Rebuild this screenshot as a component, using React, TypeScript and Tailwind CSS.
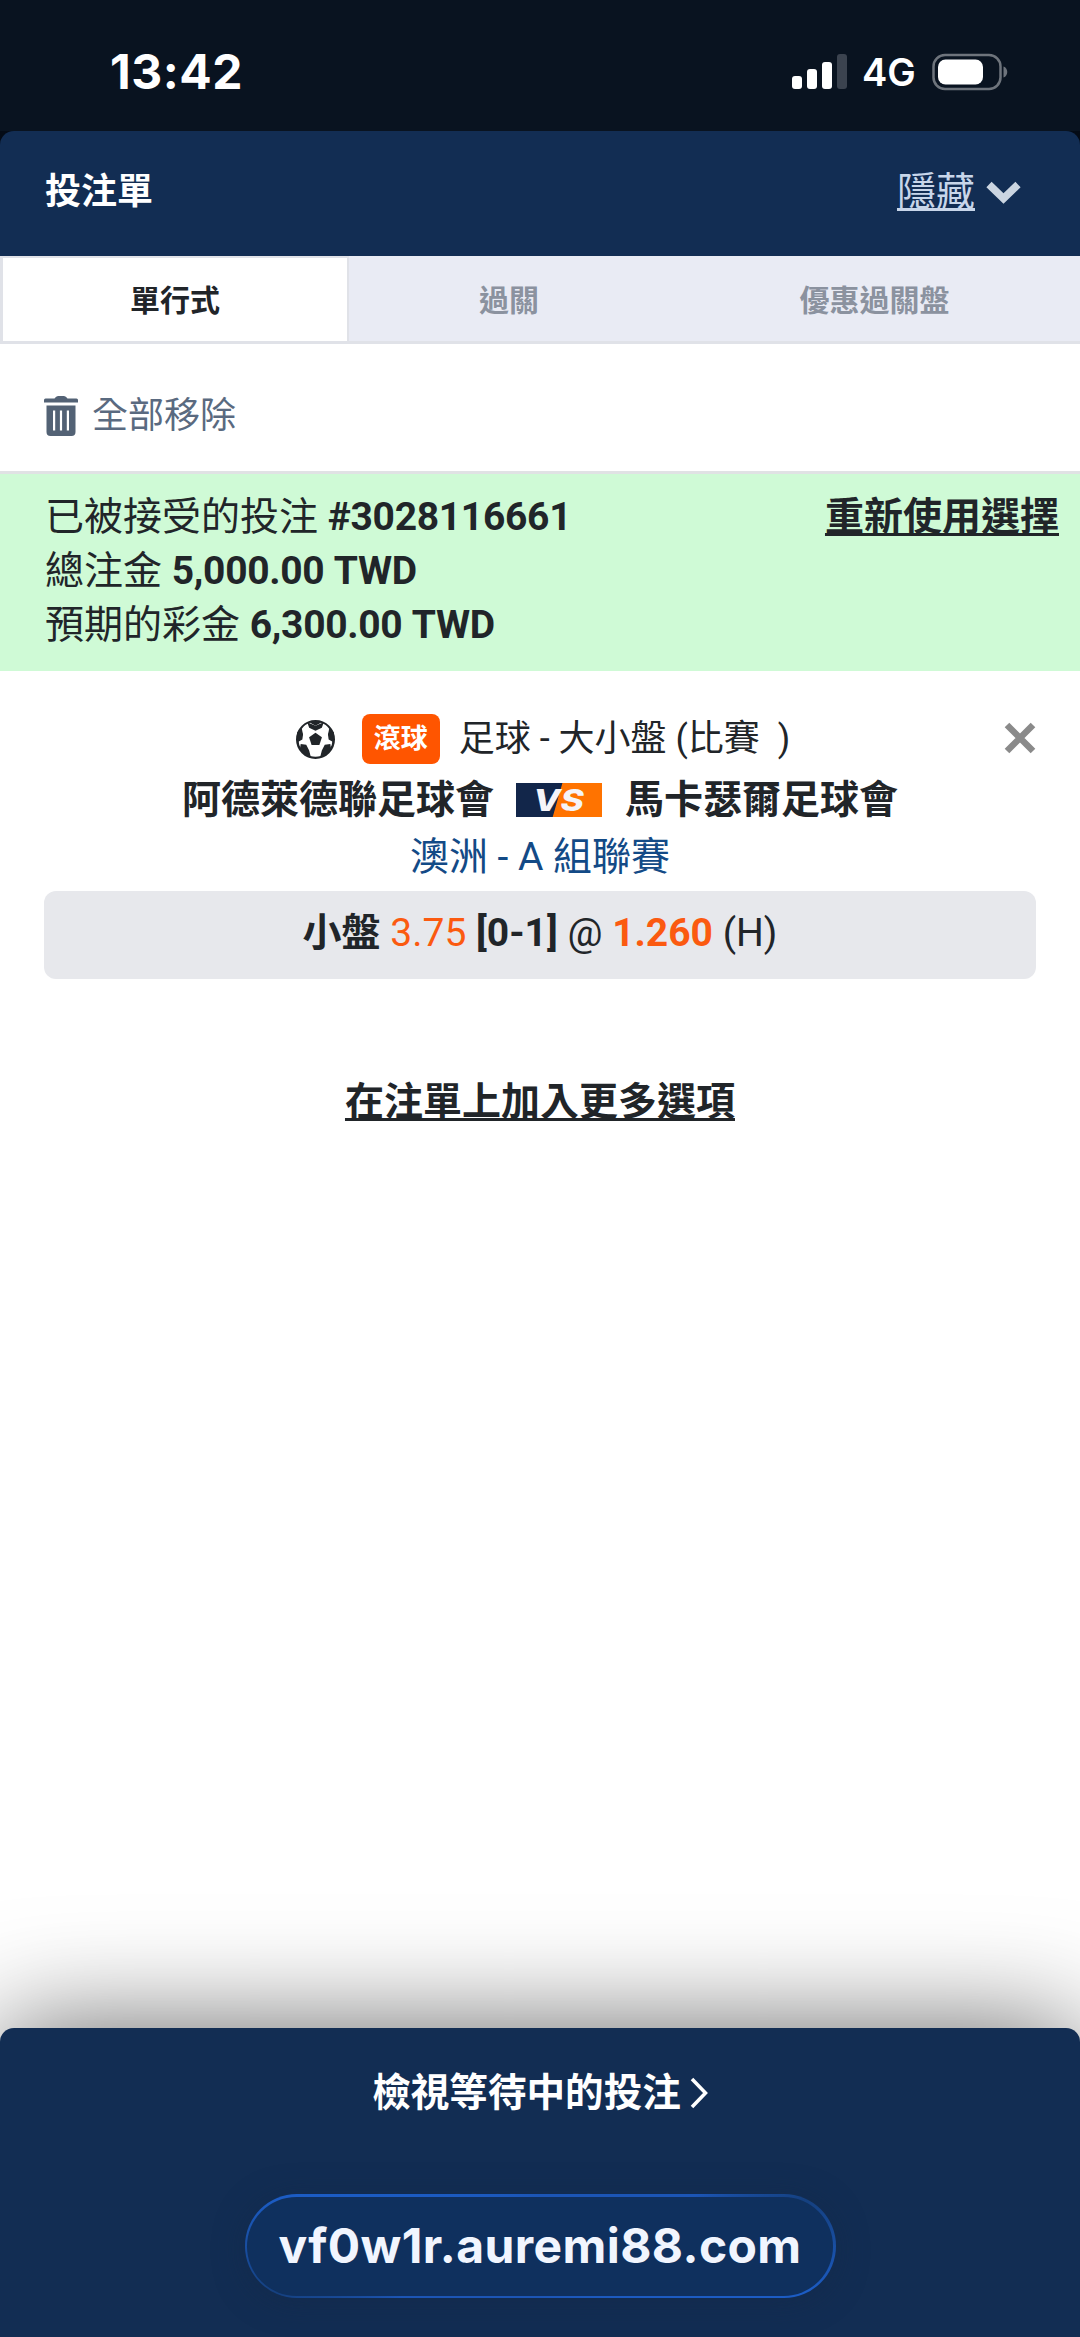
import React from "react";

function StatusBar() {
  return (
    <div className="flex h-[131px] items-center justify-between bg-[#091320] pr-[71px] pl-[110px] pt-[12px] font-['Inter',sans-serif] text-white">
      <span className="text-[48px] leading-none font-bold tracking-[0.5px]">13:42</span>
      <div className="flex items-center">
        <div className="flex h-[35px] items-end gap-[5px]">
          <i className="h-[13px] w-[10px] rounded-[3px] bg-white" />
          <i className="h-[20px] w-[10px] rounded-[3px] bg-white" />
          <i className="h-[27px] w-[10px] rounded-[3px] bg-white" />
          <i className="h-[35px] w-[10px] rounded-[3px] bg-[#3b434f]" />
        </div>
        <span className="ml-[15px] w-[70px] text-[38px] leading-none font-semibold">4G</span>
        <svg width="77" height="38" viewBox="0 0 77 38" fill="none">
          <rect x="1.5" y="2" width="67" height="34" rx="11.5" stroke="#6e747c" strokeWidth="2.5" />
          <rect x="6" y="6.5" width="45" height="25" rx="7.5" fill="#fff" />
          <path d="M71.500 13.500c5 1.500 5 9.500 0 11z" fill="#6e747c" />
        </svg>
      </div>
    </div>
  );
}

function Header() {
  return (
    <div className="bg-[#040b16]">
      <div className="flex h-[125px] items-center justify-between rounded-t-[14px] bg-[#122d53] pr-[59px] pb-[3px] pl-[45px]">
        <h1 className="text-[36px] leading-none font-bold text-white">投注單</h1>
        <div className="flex items-center gap-[11px] text-[#c8d6ea]">
          <span className="text-[39px] leading-none underline decoration-[3px] underline-offset-[3px] [text-decoration-skip-ink:none]">隱藏</span>
          <svg width="35" height="24" viewBox="0 0 35 24" fill="none">
            <path d="M3 4.500 17.500 18.500 32 4.500" stroke="#cbd5e1" strokeWidth="7.500" />
          </svg>
        </div>
      </div>
    </div>
  );
}

function Tabs() {
  return (
    <div className="flex h-[88px] items-stretch border-b-[3px] border-[#e0e2e8] bg-[#e9ebf4] text-[30px] leading-none font-bold text-[#8b929f]">
      <div className="flex w-[349px] items-center justify-center border-t-2 border-r-2 border-l-[3px] border-[#e0e2e8] bg-white pt-[2px] text-[#212529]">單行式</div>
      <div className="flex w-[320px] items-center justify-center pt-[4px]">過關</div>
      <div className="flex flex-1 items-center justify-center pt-[4px]">優惠過關盤</div>
    </div>
  );
}

function Trash() {
  return (
    <svg width="34" height="40" viewBox="0 0 34 40" fill="#536275">
      <path d="M1.500 2.500H10.500Q12 0 14 0H20Q22 0 23.500 2.500H32.500Q34 2.500 34 4V6.500H0V4Q0 2.500 1.500 2.500Z" />
      <path fillRule="evenodd" d="M2.500 9.500H31.500V36Q31.500 40 27.500 40H6.500Q2.500 40 2.500 36ZM9 14.500V34.500H11.200V14.500ZM15.900 14.500V34.500H18.100V14.500ZM22.800 14.500V34.500H25V14.500Z" />
    </svg>
  );
}

function Ball() {
  return (
    <svg width="39" height="39" viewBox="0 0 40 40" fill="#212529">
      <path fillRule="evenodd" d="M20 0A20 20 0 1 0 20 40 20 20 0 1 0 20 0ZM14.500 2.800 20 5.800 25.500 2.800Q31 4.500 34 9L32.800 15 37.600 19.500Q37.500 25.500 34.200 30.500L28 31.200 25.400 36.800Q20 38.500 14.600 36.800L12 31.200 5.800 30.500Q2.500 25.500 2.400 19.500L7.200 15 6 9Q9 4.500 14.500 2.800Z" />
      <path d="M20 13 26.600 17.800 24 25.600H16L13.400 17.800Z" />
      <path d="M11.500 2.200 20 5.800 28.500 2.200 26.500 8 20 10.900 13.500 8ZM4.500 8.500 7.200 15 6.500 20 2 22.500 1 13ZM35.500 8.500 32.800 15 33.500 20 38 22.500 39 13ZM4 30 4.800 24.500 10.500 25.500 13.500 31.200 15.300 38.500 9 36.500ZM36 30 35.200 24.500 29.500 25.500 26.500 31.200 24.700 38.500 31 36.500Z" />
    </svg>
  );
}

function Versus() {
  return (
    <span className="flex h-[34px] w-[86px] items-center justify-center bg-[linear-gradient(106deg,#12264a_48%,#ff7300_49%)] pr-[2px] font-['Inter',sans-serif] text-[30px] leading-[34px] font-extrabold text-[#f5f4f8] italic">
      <span className="inline-block scale-x-[1.18]">VS</span>
    </span>
  );
}

function Receipt() {
  return (
    <section className="flex h-[200px] items-start justify-between border-t-[3px] border-[#e0e2e4] bg-[#cffad6] pt-[16px] pr-[21px] pl-[45px] text-[39px] leading-[54px]">
      <div>
        <p>已被接受的投注 <b className="tracking-[-0.3px]">#3028116661</b></p>
        <p>總注金 <b className="tracking-[-0.3px]">5,000.00 TWD</b></p>
        <p>預期的彩金 <b className="tracking-[-0.3px]">6,300.00 TWD</b></p>
      </div>
      <a className="font-bold underline decoration-[3px] underline-offset-[3px] [text-decoration-skip-ink:none]">重新使用選擇</a>
    </section>
  );
}

function Selection() {
  return (
    <section className="relative mx-[44px] flex flex-col items-center pt-[38px] text-[39px]">
      <div className="ml-[6px] flex h-[60px] items-center">
        <Ball />
        <span className="ml-[27px] flex h-[50px] w-[78px] items-center justify-center rounded-[8px] bg-[#ff5500] text-[27px] leading-none font-bold text-white">滾球</span>
        <span className="ml-[19px] text-[36px] leading-none whitespace-pre">足球 - 大小盤 (比賽  )</span>
      </div>
      <svg className="absolute top-[51px] right-0" width="32" height="32" viewBox="0 0 32 32">
        <path d="M3 3 29 29M29 3 3 29" stroke="#8a8a8a" strokeWidth="6.500" />
      </svg>
      <div className="flex h-[58px] items-center pt-[4px] leading-none font-bold">
        <span className="mr-[22px]">阿德萊德聯足球會</span>
        <Versus />
        <span className="ml-[23px]">馬卡瑟爾足球會</span>
      </div>
      <div className="flex h-[60px] items-center leading-none text-[#134a86]">澳洲 - A 組聯賽</div>
      <div className="mt-[4px] flex h-[88px] w-full items-center justify-center rounded-[12px] bg-[#e7e8ec] pb-[4px] leading-none">
        <p><b>小盤</b> <span className="text-[#fb5a10]">3.75</span> <b>[0-1]</b> @ <b className="text-[#fb5a10]">1.260</b> (H)</p>
      </div>
    </section>
  );
}

function Footer() {
  return (
    <footer className="flex h-[309px] flex-col items-center rounded-t-[14px] bg-[#122d53] shadow-[0_0_112px_rgba(0,0,0,0.6)]">
      <div className="mt-[38px] flex h-[54px] items-center gap-[9px] text-[38.6px] leading-none font-bold text-white">
        <span>檢視等待中的投注</span>
        <svg width="18" height="32" viewBox="0 0 18 32" fill="none">
          <path d="M2 2 15.500 16 2 30" stroke="#fff" strokeWidth="3.500" />
        </svg>
      </div>
      <div className="mt-[74px] h-[104px] w-[591px] rounded-full bg-[conic-gradient(from_0deg,#1c55b5_0deg,#1c55b5_72deg,#15407f_80deg,#1c5cc4_100deg,#1c55b5_180deg,#1c55b5_250deg,#15407f_260deg,#1c5cc4_280deg,#1c55b5_360deg)] p-[2.5px] shadow-[0_4px_30px_rgba(20,42,74,0.6)]">
        <div className="flex h-full items-center justify-center rounded-full bg-[#0f305e] pb-px font-['Inter',sans-serif] text-[48px] leading-none font-bold tracking-[0.4px] text-[#f1f5fe]">vf0w1r.auremi88.com</div>
      </div>
    </footer>
  );
}

export default function App() {
  return (
    <div className="flex h-[2337px] w-[1080px] flex-col overflow-hidden bg-white font-['Roboto','Noto_Sans_CJK_TC',sans-serif] text-[#212529]">
      <StatusBar />
      <Header />
      <Tabs />
      <div className="flex h-[127px] items-center gap-[14px] pt-[17px] pl-[44px] text-[36px] leading-none text-[#5a6a80]">
        <Trash />
        <span>全部移除</span>
      </div>
      <Receipt />
      <Selection />
      <div className="mt-[95px] flex h-[56px] items-center justify-center text-[39px] leading-none font-bold">
        <a className="underline decoration-[3px] underline-offset-[3px] [text-decoration-skip-ink:none]">在注單上加入更多選項</a>
      </div>
      <div className="flex-1" />
      <Footer />
    </div>
  );
}
